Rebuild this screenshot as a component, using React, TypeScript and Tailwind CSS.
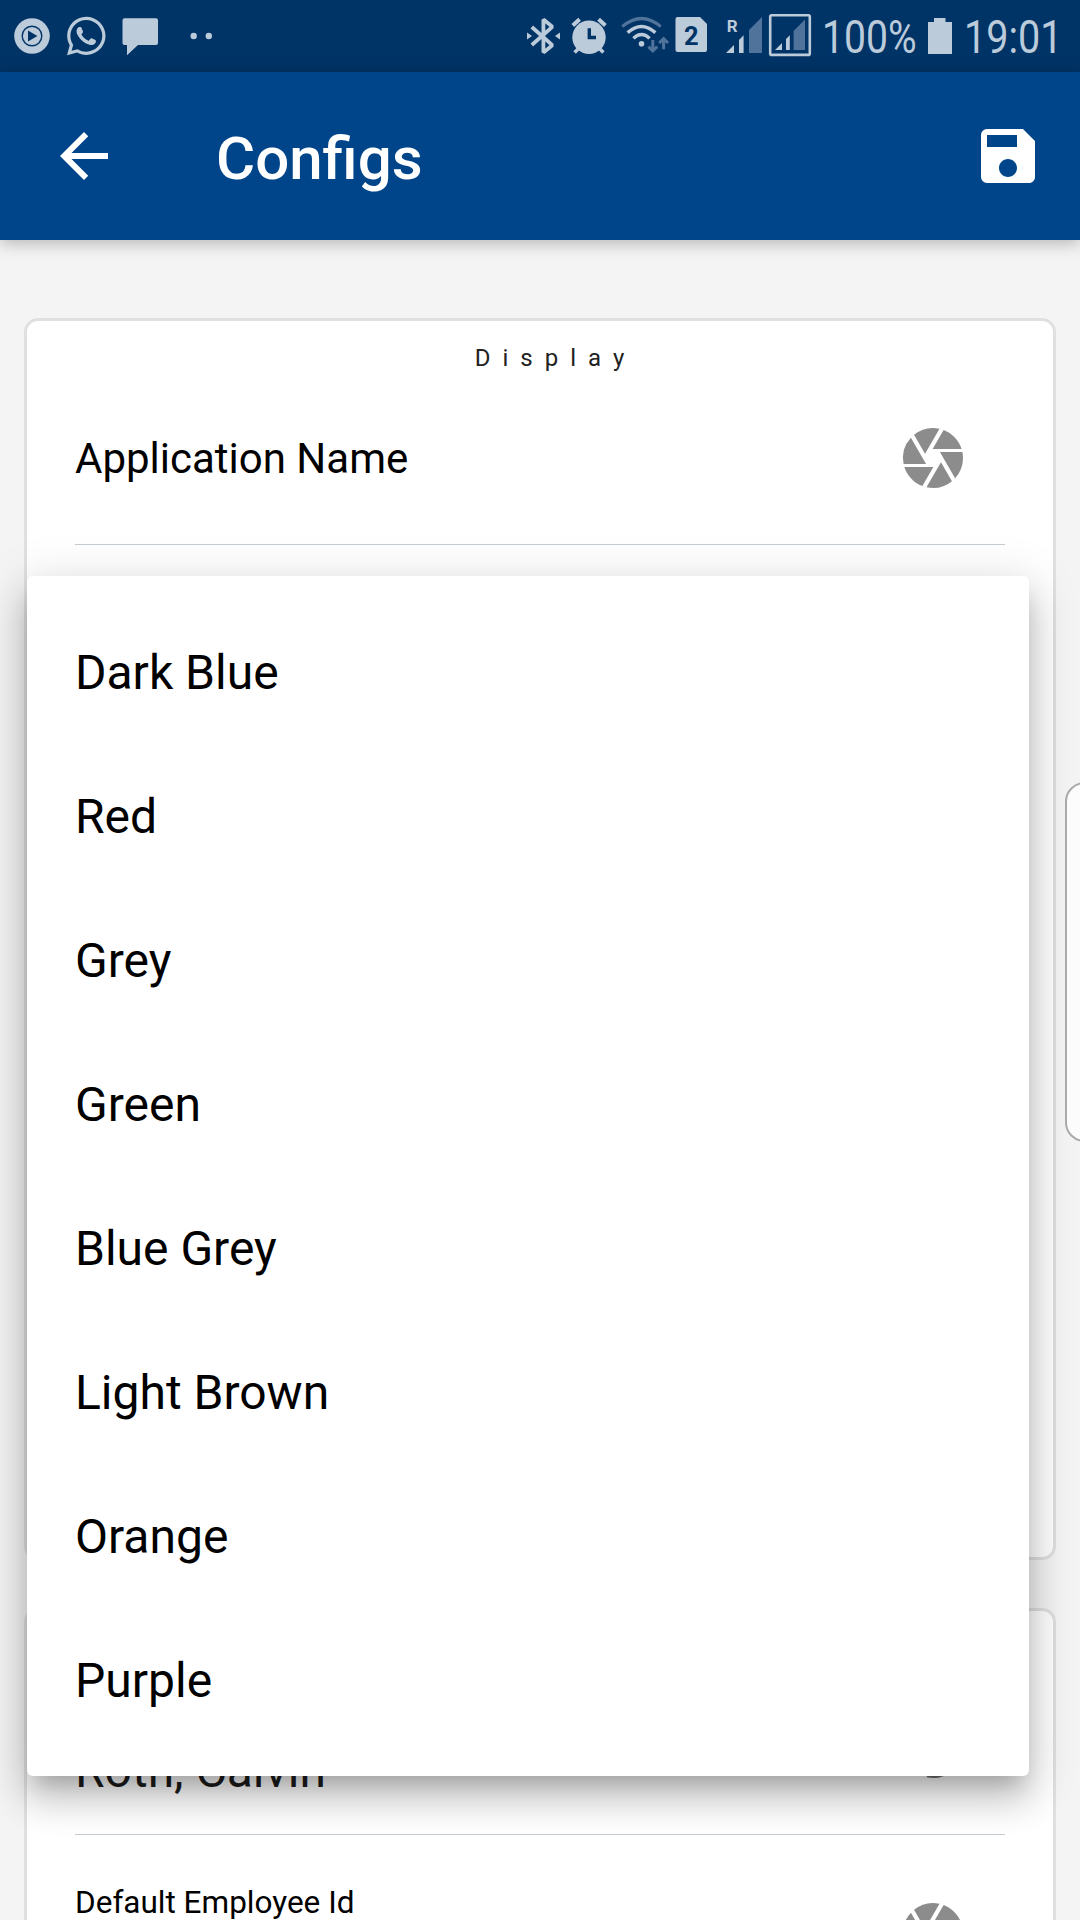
import type { ReactNode } from "react";
import { MdArrowBack, MdCamera, MdSave } from "react-icons/md";
import { FaWhatsapp } from "react-icons/fa";

const LIGHT = "#bccbda";
const DIM = "#4f739b";
const DARK = "#003366";

const colours = ["Dark Blue", "Red", "Grey", "Green", "Blue Grey", "Light Brown", "Orange", "Purple"];

function StatusBar() {
  return (
    <div className="flex h-[72px] shrink-0 items-start justify-between bg-[#003366] text-[#bccbda]">
      <div className="flex items-start">
        <svg className="ml-3 h-[72px] w-10" viewBox="12 0 40 72">
          <circle cx="32" cy="36" r="17.8" fill={LIGHT} />
          <circle cx="32" cy="36" r="9.8" fill="none" stroke={DARK} strokeWidth="1.4" />
          <path d="M28 30.6L37.4 36L28 41.4Z" fill={DARK} />
        </svg>
        <FaWhatsapp className="ml-[15px] mt-[14px] h-11 w-[38.5px]" />
        <svg className="ml-[14.5px] h-[72px] w-10" viewBox="120 0 40 72">
          <path d="M124.5 18.3H156Q158 18.3 158 20.3V43Q158 45 156 45H138L127 55.3V45H124.5Q122.5 45 122.5 43V20.3Q122.5 18.3 124.5 18.3Z" fill={LIGHT} />
        </svg>
        <svg className="ml-[25px] h-[72px] w-8" viewBox="185 0 32 72">
          <circle cx="193.7" cy="36" r="3.2" fill={LIGHT} />
          <circle cx="208.8" cy="36" r="3.2" fill={LIGHT} />
        </svg>
      </div>
      <div className="flex items-start">
        <svg className="h-[72px] w-9" viewBox="525 0 36 72">
          <path d="M531.8 27L552.3 45.2L543.4 52.6V19.4L552.3 26.8L531.8 45" fill="none" stroke={LIGHT} strokeWidth="3.8" strokeLinejoin="bevel" />
          <path d="M527 32.6V39.4L532 36ZM560 32.6V39.4L555 36Z" fill={LIGHT} />
        </svg>
        <svg className="ml-2.5 h-[72px] w-9" viewBox="571 0 36 72">
          <circle cx="589" cy="37.3" r="16.7" fill={LIGHT} />
          <path d="M572.8 25.4L579.6 19.2M605.4 25.4L598.6 19.2" stroke={LIGHT} strokeWidth="4" />
          <path d="M574.6 52.4L580 47M603.4 52.4L598 47" stroke={LIGHT} strokeWidth="3.6" />
          <path d="M589.3 28.3V37.5H596" fill="none" stroke={DARK} strokeWidth="3.4" />
        </svg>
        <svg className="ml-[13px] h-[72px] w-[50px]" viewBox="620 0 50 72">
          <path d="M622.3 26.6Q641.5 10.4 660.7 26.6" fill="none" stroke={DIM} strokeWidth="3.2" />
          <path d="M627.6 32.6Q641.5 20.4 655.4 32.6" fill="none" stroke={LIGHT} strokeWidth="3.4" />
          <path d="M633.4 38.4Q641.5 30.6 649.6 38.4" fill="none" stroke={LIGHT} strokeWidth="3.4" />
          <circle cx="641.5" cy="43.7" r="2.8" fill={LIGHT} />
          <path d="M652.8 40V51M648.4 46.6L652.8 51L657.2 46.6M663.6 49.3V38.6M659.2 43L663.6 38.6L668 43" fill="none" stroke={DIM} strokeWidth="3" />
        </svg>
        <svg className="ml-1 h-[72px] w-[35px]" viewBox="674 0 35 72">
          <path d="M677.5 17H700L707 24V50Q707 52 705 52H677.5Q675.5 52 675.5 50V19Q675.5 17 677.5 17Z" fill={LIGHT} />
          <text x="691.2" y="44.7" textAnchor="middle" fontFamily="Roboto" fontWeight="700" fontSize="25.5" fill={DARK}>2</text>
        </svg>
        <svg className="ml-[15px] h-[72px] w-10" viewBox="724 0 40 72">
          <text x="726.8" y="32.3" fontFamily="Roboto" fontWeight="700" fontSize="17" fill={LIGHT}>R</text>
          <path d="M726 53H734V45ZM739 53H743.6V35.3L739 40Z" fill={LIGHT} />
          <path d="M749 53H762V17L749 30Z" fill={DIM} />
        </svg>
        <svg className="ml-1 h-[72px] w-11" viewBox="768 0 44 72">
          <rect x="770.2" y="15.3" width="39.6" height="39.6" rx="1.5" fill="none" stroke={LIGHT} strokeWidth="2.6" />
          <path d="M775 50H782V43ZM786 50H789.8V35.2L786 39Z" fill={LIGHT} />
          <path d="M793.6 50H805V19.5L793.6 31Z" fill={DIM} />
        </svg>
        <span className="ml-[10px] mt-[11px] h-[52px] w-[93px] origin-left scale-x-[0.85] whitespace-nowrap text-[46px] leading-[52px]">100%</span>
        <svg className="ml-[11px] h-[72px] w-[28px]" viewBox="926 0 28 72">
          <path d="M934 18H945.5V22H952V54H928V22H934Z" fill={LIGHT} />
        </svg>
        <span className="mr-[22px] ml-[10px] mt-[11px] h-[52px] w-[94px] origin-left scale-x-[0.86] whitespace-nowrap text-[46px] leading-[52px]">19:01</span>
      </div>
    </div>
  );
}

function AppBar() {
  return (
    <header className="relative flex h-[168px] shrink-0 items-center bg-[#004589] pr-9 pl-12 text-white shadow-[0_3px_16px_rgba(0,0,0,0.27)]">
      <MdArrowBack className="size-[72px]" />
      <h1 className="mt-1.5 ml-24 flex-1 text-[60px] font-medium leading-[72px]">Configs</h1>
      <MdSave className="size-[72px]" />
    </header>
  );
}

function Card({ className, children }: { className: string; children: ReactNode }) {
  return (
    <section className={`mx-6 shrink-0 rounded-[14px] border-[3px] border-[#e0e0e0] bg-white px-12 ${className}`}>
      {children}
    </section>
  );
}

function ColourMenu() {
  return (
    <ul className="absolute left-[27px] top-[576px] w-[1002px] rounded-md bg-white py-6 shadow-[0_15px_20px_-9px_rgba(0,0,0,0.2),0_24px_35px_3px_rgba(0,0,0,0.14),0_9px_49px_6px_rgba(0,0,0,0.12)]">
      {colours.map((name) => (
        <li key={name} className="flex h-36 items-center px-12 pt-0.5 text-[48px] leading-[56px]">
          {name}
        </li>
      ))}
    </ul>
  );
}

export default function App() {
  return (
    <div className="relative flex h-[1920px] w-[1080px] flex-col overflow-hidden bg-[#f4f4f4] font-['Roboto',sans-serif] text-black">
      <StatusBar />
      <AppBar />
      <Card className="mt-[78px] h-[1242px]">
        <h2 className="mt-[21px] pl-[31px] text-center text-[24px] leading-8 tracking-[12px] text-[#222]">Display</h2>
        <div className="mt-12 flex h-[123px] items-start justify-between border-b border-[#c5cdd3] pr-9">
          <span className="mt-[13px] text-[42px] leading-[48px]">Application Name</span>
          <MdCamera className="size-[72px] text-[#8c8c8c]" />
        </div>
      </Card>
      <Card className="mt-12 h-[600px]">
        <div className="mt-[101px] flex h-[123px] items-start justify-between border-b border-[#c5cdd3] pr-9">
          <span className="mt-[31px] text-[48px] leading-[56px] text-[#1d1d1d]">Roth, Calvin</span>
          <MdCamera className="size-[72px] text-[#707070]" />
        </div>
        <div className="mt-[50px] flex items-start justify-between pr-9">
          <span className="text-[31.5px] leading-9">Default Employee Id</span>
          <MdCamera className="mt-3 size-[72px] text-[#8c8c8c]" />
        </div>
      </Card>
      <ColourMenu />
      <div className="absolute -right-6 top-[782px] h-[360px] w-[39px] rounded-[20px] border-2 border-[#aaaaaa] bg-[#fcfcfc]" />
    </div>
  );
}
